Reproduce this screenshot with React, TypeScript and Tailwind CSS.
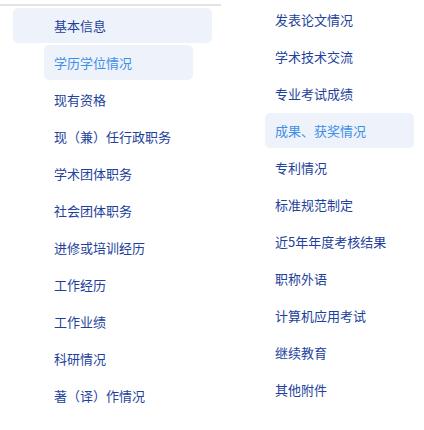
import React from 'react';

const left = [
  '学历学位情况',
  '现有资格',
  '现（兼）任行政职务',
  '学术团体职务',
  '社会团体职务',
  '进修或培训经历',
  '工作经历',
  '工作业绩',
  '科研情况',
  '著（译）作情况',
];

const right = [
  '发表论文情况',
  '学术技术交流',
  '专业考试成绩',
  '成果、获奖情况',
  '专利情况',
  '标准规范制定',
  '近5年年度考核结果',
  '职称外语',
  '计算机应用考试',
  '继续教育',
  '其他附件',
];

const Item = ({ label, active }: { label: string; active?: boolean }) => (
  <div
    className={`ml-[44px] w-[149px] h-[35px] shrink-0 flex items-center pl-[10px] rounded-[5px] whitespace-nowrap ${
      active ? 'bg-[#eef2fb] text-[#3d8fe8]' : 'text-[#233f9c]'
    }`}
  >
    {label}
  </div>
);

export default function App() {
  return (
    <div
      className="w-[424px] h-[430px] bg-white flex text-[13px] leading-none"
      style={{ fontFamily: '"Noto Sans CJK SC", "Noto Sans", sans-serif' }}
    >
      <div className="w-[221px] pt-[4px] flex flex-col">
        <div className="h-[2px] w-full bg-[#e3e3e3] shrink-0" />
        <div className="pt-[2px] flex flex-col gap-[2px]">
          <div className="ml-[13px] w-[199px] h-[35px] shrink-0 flex items-center pl-[41px] rounded-[5px] bg-[#eef2fb] text-[#233f9c]">
            基本信息
          </div>
          {left.map((l, i) => (
            <Item key={l} label={l} active={i === 0} />
          ))}
        </div>
      </div>
      <div className="flex-1 pt-[2px] flex flex-col gap-[2px]">
        {right.map((r) => (
          <Item key={r} label={r} active={r === '成果、获奖情况'} />
        ))}
      </div>
    </div>
  );
}
